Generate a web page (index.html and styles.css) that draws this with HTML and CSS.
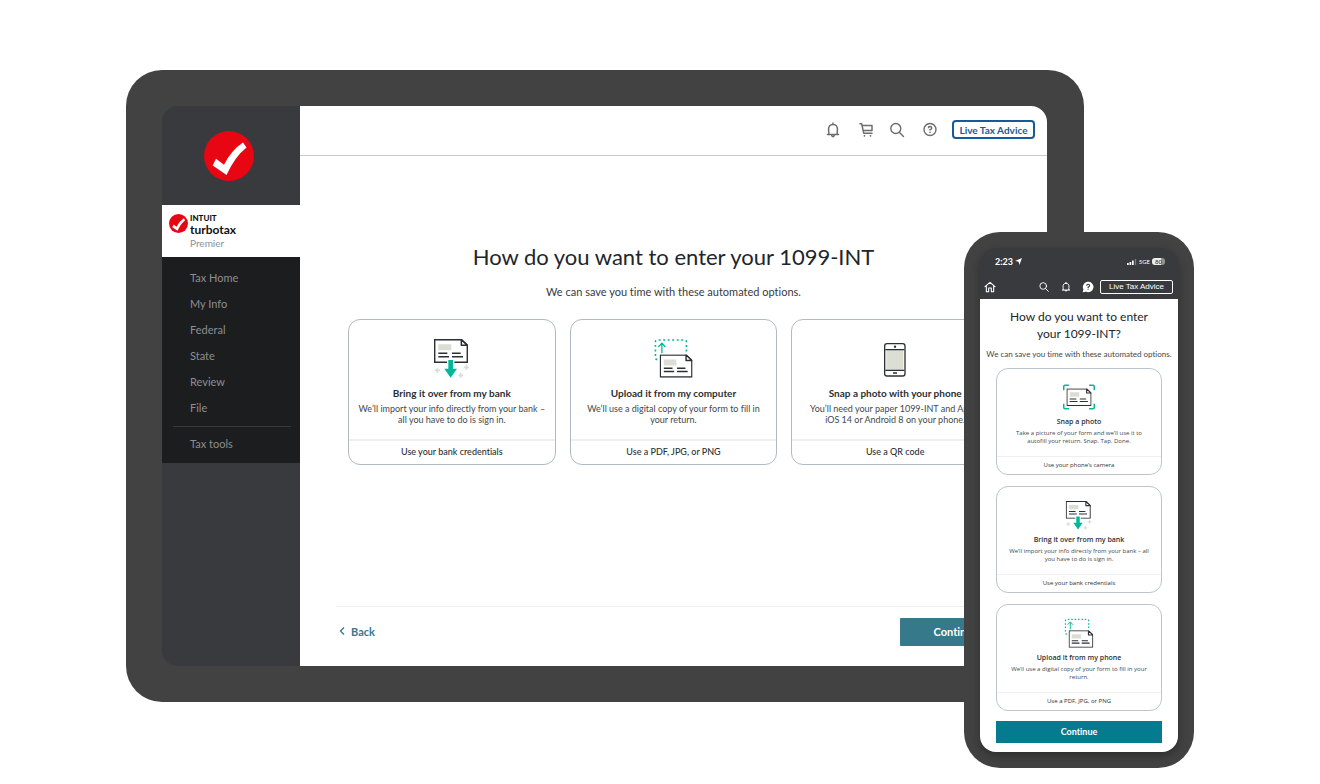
FILE: index.html
```html
<!DOCTYPE html>
<html lang="en">
<head>
<meta charset="utf-8">
<title>Enter your 1099-INT</title>
<link rel="stylesheet" href="styles.css">
</head>
<body>
<svg class="sprite" aria-hidden="true">
  <symbol id="doc" viewBox="0 0 102 72">
    <path d="M2 2H82L100 19V70H2Z" fill="#fff" stroke="#2b3034" stroke-width="4.500" stroke-linejoin="round"/>
    <path d="M82 2V19H100Z" fill="#fff" stroke="#2b3034" stroke-width="4.500" stroke-linejoin="round"/>
    <path d="M13 16H52V34H13Z" fill="#dcddd3"/>
    <path d="M13 43H40M54 43H80M13 53H45M54 53H87" stroke="#2b3034" stroke-width="4.500"/>
  </symbol>
  <symbol id="bank" viewBox="0 0 114 120">
    <use href="#doc" x="3" y="3" width="102" height="72"/>
    <path d="M42 62H64V90H42Z" fill="#fff"/>
    <path d="M46 66H60V92H72L53 119L34 92H46Z" fill="#00b899"/>
    <path d="M13 89V105M5 97H21M100 80V96M92 88H108M83 105V119M76 112H90" stroke="#dcddd8" stroke-width="5"/>
  </symbol>
  <symbol id="upload" viewBox="0 0 120 124">
    <path d="M10 67Q4 67 4 61V12Q4 6 10 6H94Q100 6 100 12V50" fill="none" stroke="#00b899" stroke-width="5" stroke-dasharray="6 8"/>
    <path d="M24 47V18M13 28L24 16L35 28" fill="none" stroke="#00b899" stroke-width="4"/>
    <use href="#doc" x="17" y="51" width="102" height="72"/>
  </symbol>
  <symbol id="snap" viewBox="0 0 130 102">
    <path d="M3 24V8Q3 3 8 3H24M106 3H122Q127 3 127 8V24M127 78V94Q127 99 122 99H106M24 99H8Q3 99 3 94V78" fill="none" stroke="#00b899" stroke-width="6"/>
    <use href="#doc" x="14" y="16" width="102" height="72"/>
  </symbol>
  <symbol id="mobile" viewBox="0 0 66 120">
    <rect x="2" y="17" width="61" height="97" rx="7" fill="#fff" stroke="#2b3034" stroke-width="4"/>
    <path d="M7 36H58V96H7Z" fill="#dcddd3"/>
    <path d="M4 35H61M4 97H61M27 105H39" stroke="#2b3034" stroke-width="4"/>
    <circle cx="33" cy="26" r="3.500" fill="#2b3034"/>
  </symbol>
  <symbol id="check" viewBox="0 0 50 50">
    <circle cx="25" cy="25" r="25" fill="#e80613"/>
    <path d="M8.700 34.600L12 27.800L20 33.700Q27.500 19 39 11.500L42.500 16.500Q31 25.500 22.500 44Z" fill="#fff"/>
  </symbol>
  <symbol id="bell" viewBox="0 0 18 18">
    <path d="M3.500 13.500H14.500M4.800 13.300Q5 11.500 4.600 9.800C4.200 5 6 3.500 9 3.500S13.800 5 13.400 9.800Q13 11.500 13.200 13.300M9 3.300V2M7.500 14Q9 17.500 10.500 14" fill="none" stroke="currentColor" stroke-width="1.500" stroke-linecap="round" stroke-linejoin="round"/>
  </symbol>
  <symbol id="search" viewBox="0 0 18 18">
    <path d="M11.300 11.300L15.500 15.500M12.800 7.500A5 5 0 1 1 2.800 7.500A5 5 0 1 1 12.800 7.500Z" fill="none" stroke="currentColor" stroke-width="1.400" stroke-linecap="round"/>
  </symbol>
  <symbol id="cart" viewBox="0 0 18 18">
    <path d="M4 2.800H5.700L7.700 12.200H16M6.300 4.500H16V9.500H7.300" fill="none" stroke="currentColor" stroke-width="1.500" stroke-linejoin="round" stroke-linecap="round"/>
    <circle cx="8.500" cy="14.800" r=".9" fill="currentColor"/><circle cx="14.500" cy="14.800" r=".9" fill="currentColor"/>
  </symbol>
  <symbol id="help" viewBox="0 0 18 18">
    <circle cx="10" cy="8.500" r="6" fill="none" stroke="currentColor" stroke-width="1.400"/>
    <path d="M8.300 7.200Q8.300 5.600 10 5.600T11.700 7.200Q11.700 8.200 10 8.800V9.600M10 10.700V12" fill="none" stroke="currentColor" stroke-width="1.500"/>
  </symbol>
  <symbol id="bubble" viewBox="0 0 18 18">
    <path d="M1 17L2.200 12.500A8 7.800 0 1 1 6 16Z" fill="#fff"/>
    <path d="M7 7Q7 4.800 9.200 4.800T11.400 7Q11.400 8.300 9.200 9.200V10.400M9.200 11.700V13.200" fill="none" stroke="#393a3e" stroke-width="1.700"/>
  </symbol>
  <symbol id="home" viewBox="0 0 18 18">
    <path d="M1.500 8.500L9 2L16.500 8.500M3.500 7V16H7V10.500H11V16H14.500V7" fill="none" stroke="currentColor" stroke-width="1.600" stroke-linejoin="round" stroke-linecap="round"/>
  </symbol>
</svg>

<main class="scene">
  <section class="tablet" aria-label="Tablet">
    <div class="tablet-screen">
      <aside class="sidebar">
        <div class="sidebar-logo"><svg class="logo-large"><use href="#check"/></svg></div>
        <div class="brand">
          <svg class="logo-small"><use href="#check"/></svg>
          <div class="brand-text">
            <span class="brand-intuit">INTUIT</span>
            <span class="brand-name">turbotax</span>
            <span class="brand-tier">Premier</span>
          </div>
        </div>
        <nav class="menu">
          <a href="#">Tax Home</a>
          <a href="#">My Info</a>
          <a href="#">Federal</a>
          <a href="#">State</a>
          <a href="#">Review</a>
          <a href="#">File</a>
          <hr class="menu-line">
          <a href="#">Tax tools</a>
        </nav>
      </aside>
      <div class="page">
        <header class="topbar">
          <button class="icon-button" aria-label="Notifications"><svg><use href="#bell"/></svg></button>
          <button class="icon-button" aria-label="Cart"><svg><use href="#cart"/></svg></button>
          <button class="icon-button" aria-label="Search"><svg><use href="#search"/></svg></button>
          <button class="icon-button" aria-label="Help"><svg><use href="#help"/></svg></button>
          <button class="advice">Live Tax Advice</button>
        </header>
        <div class="content">
          <h1 class="title">How do you want to enter your 1099-INT</h1>
          <p class="subtitle">We can save you time with these automated options.</p>
          <div class="cards">
            <article class="card">
              <div class="card-body">
                <svg class="art art-bank"><use href="#bank"/></svg>
                <h2>Bring it over from my bank</h2>
                <p>We’ll import your info directly from your bank – <br>all you have to do is sign in.</p>
              </div>
              <button class="card-action">Use your bank credentials</button>
            </article>
            <article class="card">
              <div class="card-body">
                <svg class="art art-upload"><use href="#upload"/></svg>
                <h2>Upload it from my computer</h2>
                <p>We’ll use a digital copy of your form to fill in <br>your return.</p>
              </div>
              <button class="card-action">Use a PDF, JPG, or PNG</button>
            </article>
            <article class="card">
              <div class="card-body">
                <svg class="art art-mobile"><use href="#mobile"/></svg>
                <h2>Snap a photo with your phone</h2>
                <p>You’ll need your paper 1099-INT and Apple <br>iOS 14 or Android 8 on your phone.</p>
              </div>
              <button class="card-action">Use a QR code</button>
            </article>
          </div>
        </div>
        <footer class="actions">
          <button class="back"><svg class="chevron" viewBox="0 0 6 8"><path d="M5 0.500L1.500 4L5 7.500" fill="none" stroke="currentColor" stroke-width="1.300"/></svg>Back</button>
          <button class="continue">Continue</button>
        </footer>
      </div>
    </div>
  </section>

  <section class="phone" aria-label="Phone">
    <div class="phone-screen">
      <header class="phone-top">
        <div class="status">
          <span class="clock">2:23 <svg class="arrow" viewBox="0 0 8 8"><path d="M8 0L5 8L4.200 4.200L0 3.400Z" fill="#fff"/></svg></span>
          <span class="status-right">
            <svg class="signal" viewBox="0 0 10 6"><path d="M0 4H1.700V6H0ZM2.500 3H4.200V6H2.500ZM5 1.500H6.700V6H5Z" fill="#fff"/><path d="M7.800 0H9.200V6H7.800Z" fill="#77787b"/></svg>
            <span class="network">5GE</span>
            <span class="battery">80</span>
          </span>
        </div>
        <div class="phone-bar">
          <button class="mini-icon" aria-label="Home"><svg><use href="#home"/></svg></button>
          <div class="phone-tools">
            <button class="mini-icon" aria-label="Search"><svg><use href="#search"/></svg></button>
            <button class="mini-icon" aria-label="Notifications"><svg><use href="#bell"/></svg></button>
            <button class="mini-icon" aria-label="Help"><svg><use href="#bubble"/></svg></button>
          </div>
          <button class="phone-advice">Live Tax Advice</button>
        </div>
      </header>
      <div class="phone-content">
        <h1 class="phone-title">How do you want to enter your 1099-INT?</h1>
        <p class="phone-subtitle">We can save you time with these automated options.</p>
        <div class="phone-cards">
          <article class="card">
            <div class="card-body">
              <svg class="art art-snap"><use href="#snap"/></svg>
              <h2>Snap a photo</h2>
              <p>Take a picture of your form and we’ll use it to <br>autofill your return. Snap. Tap. Done.</p>
            </div>
            <button class="card-action">Use your phone’s camera</button>
          </article>
          <article class="card">
            <div class="card-body">
              <svg class="art art-bank"><use href="#bank"/></svg>
              <h2>Bring it over from my bank</h2>
              <p>We’ll import your info directly from your bank – all <br>you have to do is sign in.</p>
            </div>
            <button class="card-action">Use your bank credentials</button>
          </article>
          <article class="card">
            <div class="card-body">
              <svg class="art art-upload"><use href="#upload"/></svg>
              <h2>Upload it from my phone</h2>
              <p>We’ll use a digital copy of your form to fill in your <br>return.</p>
            </div>
            <button class="card-action">Use a PDF, JPG, or PNG</button>
          </article>
        </div>
        <button class="phone-continue">Continue</button>
      </div>
    </div>
  </section>
</main>
</body>
</html>
```
FILE: styles.css
```css
* { box-sizing: border-box; }
body {
  margin: 0;
  background: #fff;
  color: #2b3034;
  font-family: Lato, "Open Sans", sans-serif;
  font-variant-ligatures: none;
}
button {
  margin: 0;
  padding: 0;
  border: 0;
  background: none;
  color: inherit;
  font: inherit;
  font-variant-ligatures: none;
  cursor: pointer;
}
h1, h2, p { margin: 0; }
svg { display: block; flex: none; }
.sprite { position: absolute; width: 0; height: 0; }

/* Both devices share one grid cell, so the phone overlaps the tablet. */
.scene {
  display: grid;
  align-items: start;
  min-width: 1120px;
  min-height: 100vh;
  padding: 70px 126px 16px;
}
.tablet {
  grid-area: 1 / 1;
  margin-right: 110px;
  padding: 36px 37px 36px 36px;
  border-radius: 36px;
  background: #424242;
}
.tablet-screen {
  display: flex;
  min-height: 560px;
  border-radius: 16px;
  overflow: hidden;
}

.sidebar { flex: none; width: 138px; background: #393a3e; }
.sidebar-logo { display: flex; justify-content: center; padding: 25px 4px 24px 0; }
.logo-large { width: 50px; height: 50px; }
.brand {
  display: flex;
  gap: 2px;
  height: 52px;
  padding: 9px 7px;
  background: #fff;
  color: #111;
}
.logo-small { width: 19px; height: 19px; }
.brand-text { display: flex; flex-direction: column; }
.brand-intuit { font-size: 8px; line-height: 9px; font-weight: 900; }
.brand-name { font-size: 12px; line-height: 14px; font-weight: 700; }
.brand-tier { font-size: 10px; line-height: 12px; color: #8d9096; }
.menu {
  display: flex;
  flex-direction: column;
  padding: 8px 0 6px;
  background: #1c1d1f;
}
.menu a {
  padding-left: 28px;
  color: #8d8e91;
  font-size: 11px;
  line-height: 26px;
  text-decoration: none;
}
.menu-line {
  width: 118px;
  margin: 5px auto 4px 11px;
  border: 0;
  border-top: 1px solid #38393c;
}

.page {
  flex: 1;
  display: flex;
  flex-direction: column;
  min-width: 0;
  background: #fff;
}
.topbar {
  display: flex;
  align-items: center;
  justify-content: flex-end;
  gap: 14px;
  height: 50px;
  padding: 0 12px 2px 0;
  border-bottom: 1px solid #c5cbd1;
}
.icon-button { color: #6b6c72; }
.icon-button svg { width: 18px; height: 18px; }
.advice {
  width: 83px;
  height: 19px;
  border: 2px solid #155a99;
  border-radius: 4px;
  color: #155a99;
  font-size: 10px;
  line-height: 14px;
  font-weight: 700;
}
.content { flex: 1; padding: 85px 48px 20px; text-align: center; }
.title { font-size: 22px; line-height: 32px; font-weight: 400; color: #21262a; }
.subtitle { margin-top: 11px; font-size: 11px; line-height: 16px; color: #393a3d; }
.cards {
  display: grid;
  grid-template-columns: repeat(3, 1fr);
  gap: 14px;
  margin-top: 19px;
}
.card {
  display: flex;
  flex-direction: column;
  border: 1px solid #b0bac0;
  border-radius: 12px;
  overflow: hidden;
  background: #fff;
  text-align: center;
}
.card-body {
  display: flex;
  flex-direction: column;
  align-items: center;
  padding: 18px 0 14px;
}
.card h2 { margin: 8px 0 3px; font-size: 10px; line-height: 14px; font-weight: 700; }
.card p { font-size: 9px; line-height: 11px; color: #44484c; white-space: nowrap; }
.card-action {
  height: 25px;
  padding-bottom: 2px;
  border-top: 2px solid #ecf0f3;
  font-size: 9px;
  font-weight: 500;
}
.art { height: 40px; }
.art-bank { width: 38px; }
.art-upload { width: 39px; }
.art-mobile { width: 22px; }
.actions {
  display: flex;
  justify-content: space-between;
  align-items: center;
  margin: 0 35px 20px 36px;
  padding-top: 11px;
  border-top: 1px solid #eeeff0;
}
.back {
  display: flex;
  align-items: center;
  gap: 6px;
  padding: 0 0 2px 3px;
  color: #35798b;
  font-size: 11px;
  font-weight: 700;
}
.chevron { width: 6px; height: 8px; }
.continue {
  width: 112px;
  height: 28px;
  padding-bottom: 2px;
  border-radius: 1px;
  background: #35798b;
  color: #fff;
  font-size: 11px;
  font-weight: 700;
}

.phone {
  grid-area: 1 / 1;
  justify-self: end;
  width: 230px;
  margin-top: 162px;
  padding: 16px;
  border-radius: 36px;
  background: #424242;
}
.phone-screen {
  border-radius: 16px;
  overflow: hidden;
  box-shadow: 0 4px 10px rgba(0, 0, 0, 0.3);
}
.phone-top { background: #393a3e; color: #fff; }
.status {
  display: flex;
  justify-content: space-between;
  align-items: center;
  height: 27px;
  padding: 0 13px 0 15px;
}
.clock { display: flex; align-items: center; gap: 2px; font-size: 9px; font-weight: 700; }
.arrow { width: 7px; height: 7px; }
.status-right { display: flex; align-items: center; gap: 2px; }
.signal { width: 10px; height: 6px; }
.network { font-size: 6px; line-height: 8px; }
.battery {
  width: 13px;
  border-radius: 3px;
  background: linear-gradient(90deg, #eee 70%, #909193 70%);
  color: #55565a;
  font-size: 6px;
  line-height: 7px;
  font-weight: 700;
  text-align: center;
}
.phone-bar {
  display: flex;
  align-items: center;
  gap: 6px;
  height: 24px;
  padding: 0 5px 0 4px;
}
.phone-tools { display: flex; gap: 10px; margin-left: auto; }
.mini-icon svg { width: 12px; height: 12px; }
.phone-advice {
  width: 73px;
  height: 14px;
  border: 1px solid #fff;
  border-radius: 2px;
  font-family: "Liberation Sans", Arial, sans-serif;
  font-size: 8px;
  line-height: 12px;
}
.phone-content { padding: 9px 16px; background: #fff; text-align: center; }
.phone-title { padding: 0 8px; font-size: 12px; line-height: 17px; font-weight: 400; color: #21262a; }
.phone-subtitle {
  margin: 6px -12px 0;
  font-size: 8px;
  line-height: 12px;
  color: #44484c;
  white-space: nowrap;
}
.phone-cards {
  display: flex;
  flex-direction: column;
  gap: 11px;
  margin-top: 8px;
  font-family: "Open Sans", Lato, sans-serif;
}
.phone-cards .card { border-color: #bcc5ca; }
.phone-cards .card-body { padding: 13px 0 11px; }
.phone-cards .art { height: 30px; }
.phone-cards .art-bank { width: 28px; }
.phone-cards .art-upload { width: 30px; }
.phone-cards .art-snap { width: 32px; }
.phone-cards h2 { margin: 5px 0 2px; font-size: 7px; line-height: 10px; font-weight: 600; }
.phone-cards p { font-size: 6px; line-height: 8px; }
.phone-cards .card-action { height: 18px; border-top-width: 1px; font-size: 6px; }
.phone-continue {
  width: 100%;
  height: 22px;
  margin-top: 10px;
  background: #047b8e;
  color: #fff;
  font-size: 9px;
  line-height: 22px;
  font-weight: 700;
}
```
